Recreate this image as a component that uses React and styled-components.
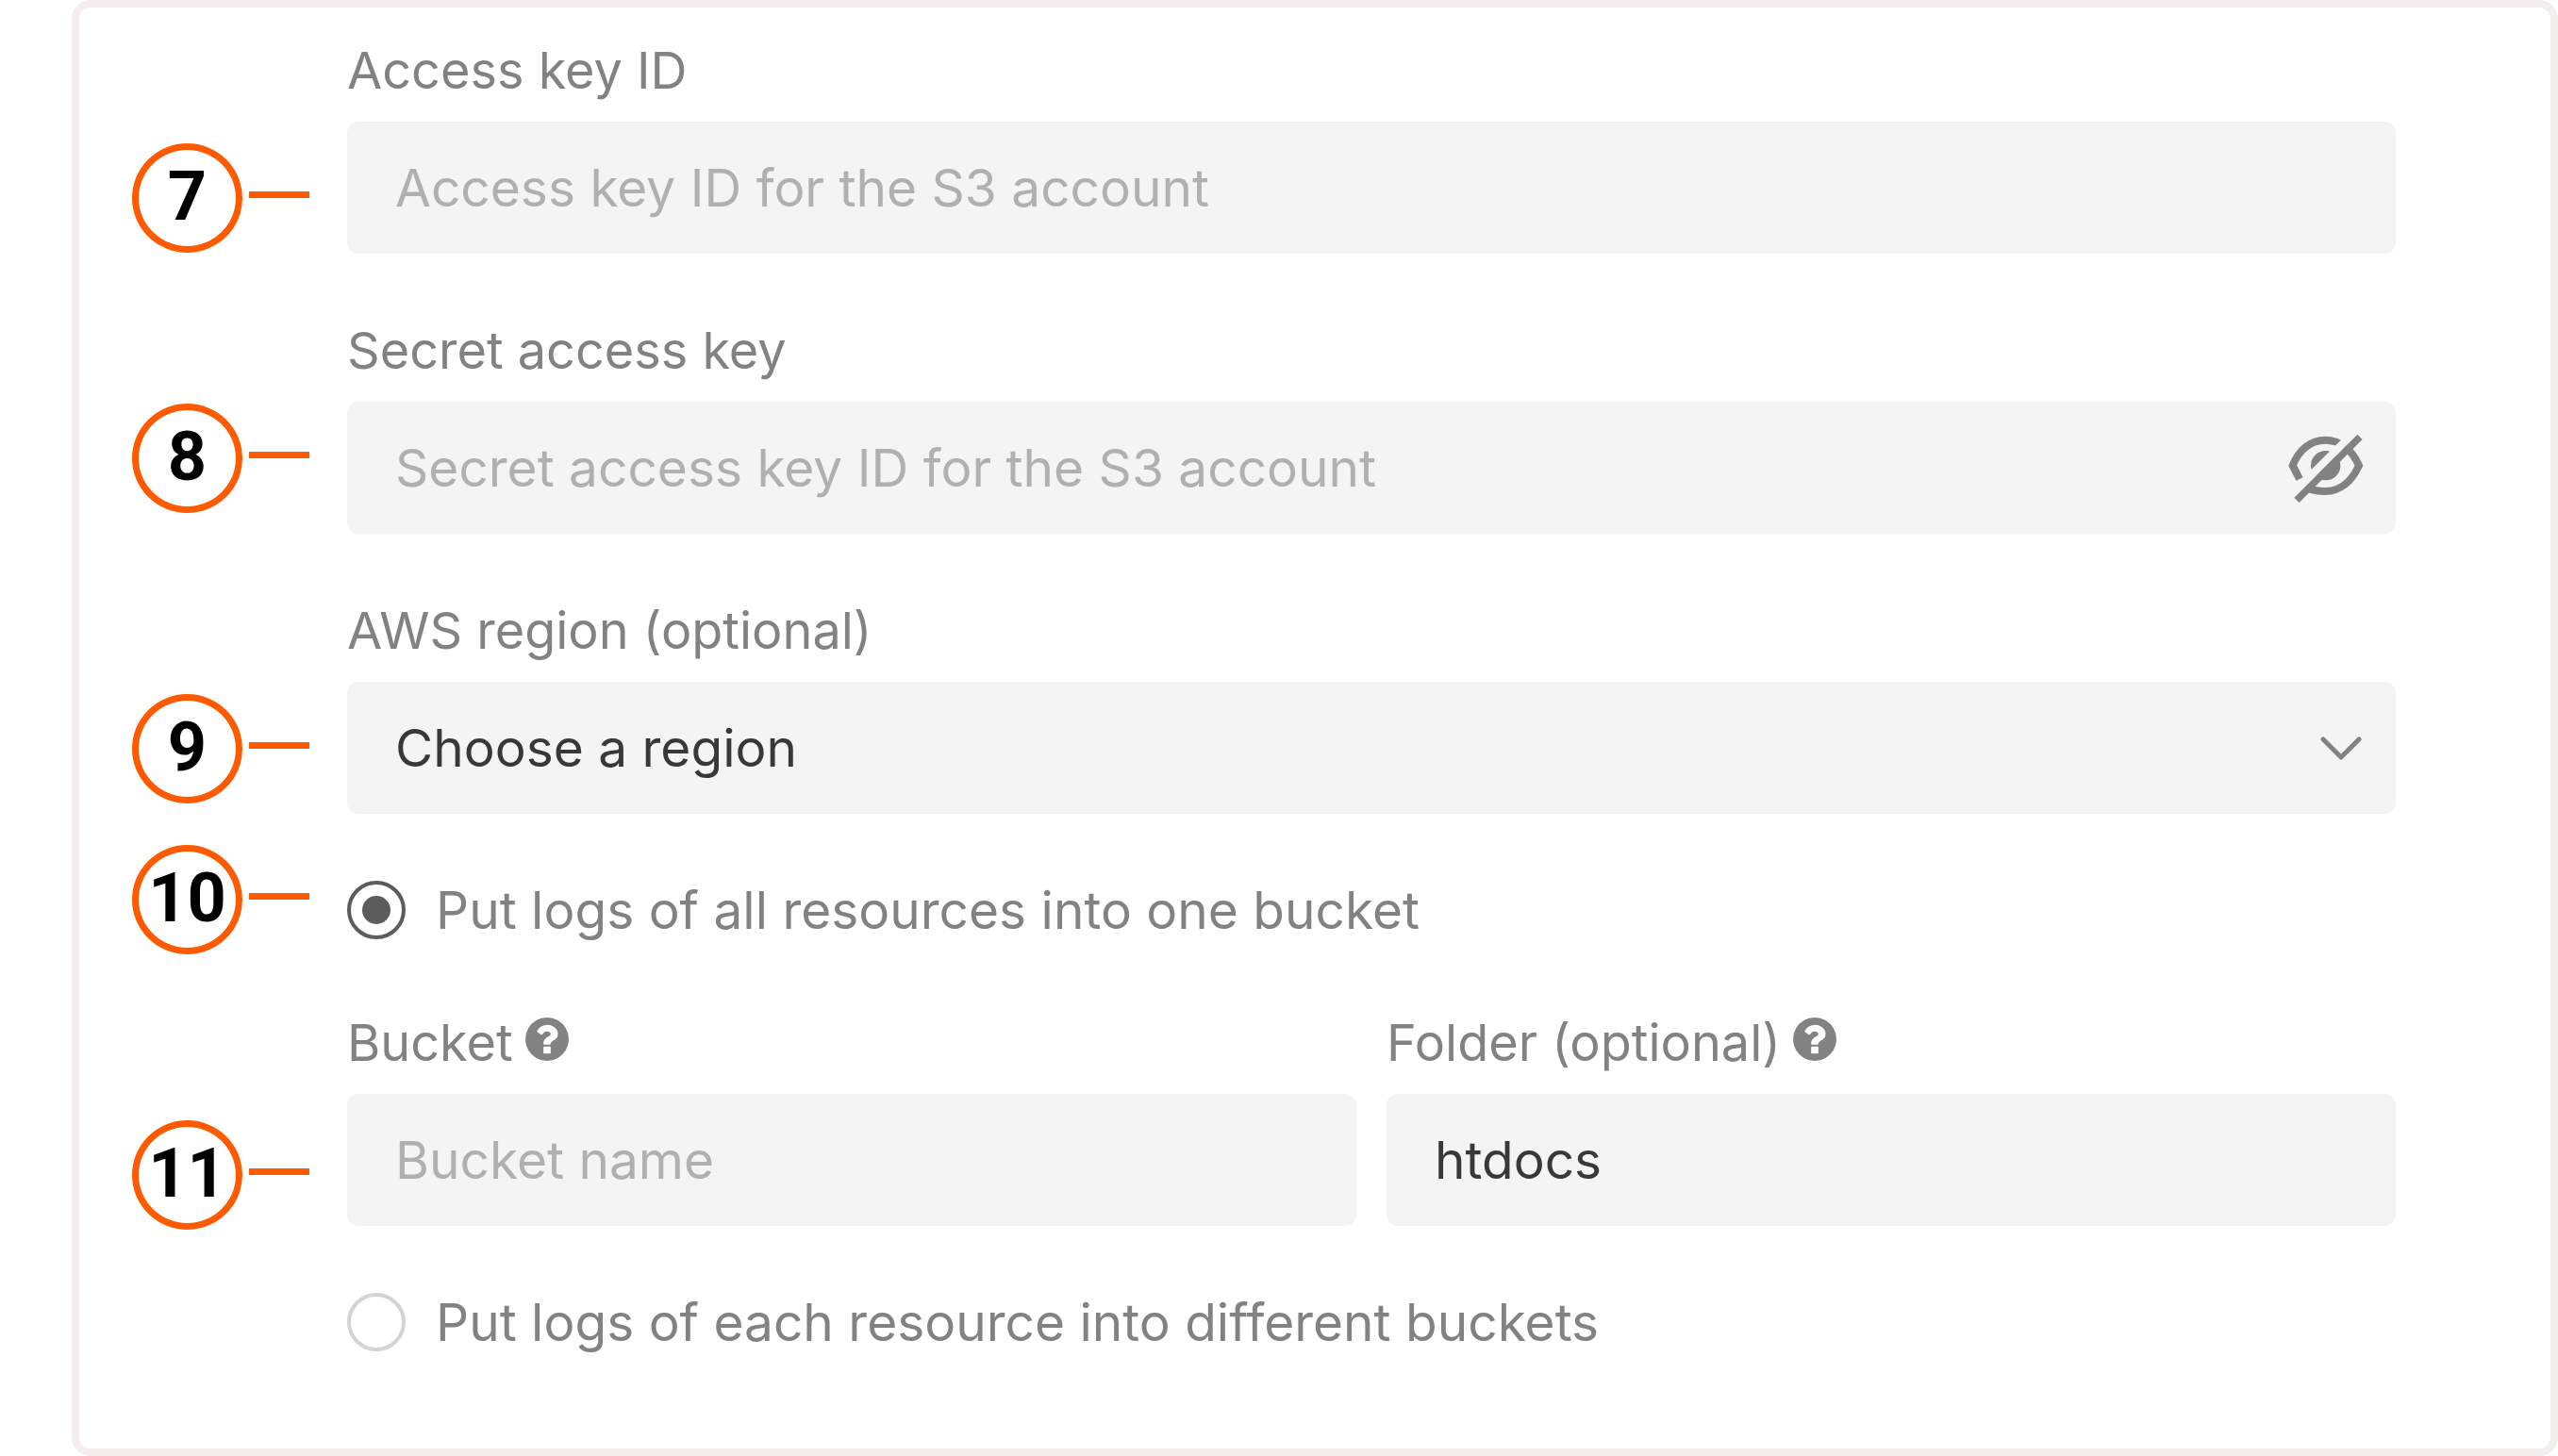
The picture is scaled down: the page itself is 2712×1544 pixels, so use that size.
import React, { useState } from "react";
import styled, { createGlobalStyle } from "styled-components";

const Global = createGlobalStyle`
  *, *::before, *::after { box-sizing: border-box; }
  body {
    margin: 0;
    background: #fff;
    font-family: Inter, "Liberation Sans", sans-serif;
  }
`;

const Panel = styled.main`
  display: grid;
  grid-template-columns: max-content minmax(0, 1fr);
  column-gap: 40px;
  margin-left: 76px;
  padding: 33px 164px 101px 56px;
  border: 8px solid #f4eeef;
  border-radius: 20px;
`;

const Steps = styled.ol`
  margin: 0;
  padding: 111px 0 0;
  list-style: none;
`;

const Step = styled.li`
  display: flex;
  align-items: center;
  gap: 7px;
  margin-bottom: ${(p) => p.$after}px;

  &::after {
    content: "";
    width: 64px;
    height: 7px;
    margin-bottom: 7px;
    background: #ff5a00;
  }
`;

const StepNumber = styled.span`
  display: flex;
  align-items: center;
  justify-content: center;
  width: 117px;
  height: 116px;
  padding-bottom: 2px;
  border: 7px solid #ff5a00;
  border-radius: 50%;
  color: #000;
  font: 700 72px/72px Roboto, "Liberation Sans", sans-serif;
`;

const Form = styled.form`
  display: flex;
  flex-direction: column;
  gap: 69px;
`;

const Field = styled.div`
  display: flex;
  flex-direction: column;
  gap: 20px;
`;

const FieldPair = styled.div`
  display: grid;
  grid-template-columns: 1fr 1fr;
  gap: 32px;
  padding-top: 5px;
`;

const LabelRow = styled.div`
  display: flex;
  align-items: center;
  gap: 13px;
`;

const Label = styled.label`
  color: #828282;
  font-size: 54px;
  line-height: 68px;
`;

const Control = styled.div`
  position: relative;
`;

const Input = styled.input`
  display: block;
  width: 100%;
  height: 140px;
  padding: 0 51px;
  border: 0;
  border-radius: 12px;
  background: #f4f4f4;
  color: #383838;
  font: 400 55px/68px Inter, "Liberation Sans", sans-serif;

  &::placeholder {
    color: #b0b0b0;
    opacity: 1;
  }
`;

const Select = styled(Input).attrs({ as: "select" })`
  appearance: none;
`;

const ChevronIcon = styled.svg`
  position: absolute;
  top: 56px;
  right: 36px;
  width: 44px;
  height: 28px;
  pointer-events: none;
`;

const IconButton = styled.button`
  display: block;
  padding: 0;
  border: 0;
  background: none;
  color: #828282;
  cursor: pointer;

  svg {
    display: block;
    width: 100%;
    height: 100%;
  }
`;

const RevealButton = styled(IconButton)`
  position: absolute;
  top: 34px;
  right: 34px;
  width: 80px;
  height: 74px;
`;

const HelpButton = styled(IconButton)`
  width: 46px;
  height: 46px;
  margin-bottom: 8px;
`;

const RadioRow = styled.label`
  display: flex;
  align-items: center;
  gap: 32px;
  color: #828282;
  font-size: 55px;
  line-height: 66px;
`;

const Radio = styled.input`
  appearance: none;
  display: grid;
  place-items: center;
  flex: none;
  width: 62px;
  height: 62px;
  margin: 0;
  border: 4px solid #d4d4d4;
  border-radius: 50%;

  &:checked {
    border-color: #5c5c5c;
  }

  &:checked::before {
    content: "";
    width: 30px;
    height: 30px;
    border-radius: 50%;
    background: #5c5c5c;
  }
`;

const steps = [
  { number: 7, after: 160 },
  { number: 8, after: 192 },
  { number: 9, after: 44 },
  { number: 10, after: 176 },
  { number: 11, after: 0 },
];

function Help({ label }) {
  return (
    <HelpButton type="button" aria-label={label}>
      <svg viewBox="128 128 1536 1536" fill="currentColor" aria-hidden="true">
        <path d="M1024 1376v-192q0-14-9-23t-23-9h-192q-14 0-23 9t-9 23v192q0 14 9 23t23 9h192q14 0 23-9t9-23zm256-672q0-88-55.5-163t-138.5-116-170-41q-243 0-371 213-15 24 8 42l132 100q7 6 19 6 16 0 25-12 53-68 86-92 34-24 86-24 48 0 85.5 26t37.5 59q0 38-20 61t-68 45q-63 28-115.5 86.5t-52.5 125.5v36q0 14 9 23t23 9h192q14 0 23-9t9-23q0-19 21.5-49.5t54.5-49.5q32-18 49-28.5t46-35 44.5-48 28-60.5 12.5-81zm384 192q0 209-103 385.5t-279.5 279.5-385.5 103-385.5-103-279.5-279.5-103-385.5 103-385.5 279.5-279.5 385.5-103 385.5 103 279.5 279.5 103 385.5z" />
      </svg>
    </HelpButton>
  );
}

function EyeOff() {
  return (
    <svg viewBox="0 0 240 222" fill="none" aria-hidden="true">
      <g stroke="currentColor" strokeWidth="24">
        <path d="M36 144 L14 101 C34 50 72 20 118 20 C164 20 202 50 225 101 C202 152 164 183 118 183 C98 183 82 181 66 175" />
      </g>
      <circle cx="119" cy="101" r="47" fill="currentColor" />
      <path d="M16 189 L189 16" stroke="#f4f4f4" strokeWidth="25" />
      <path d="M27 211 L228 10" stroke="currentColor" strokeWidth="22" />
    </svg>
  );
}

export default function App() {
  const [visible, setVisible] = useState(false);
  const [mode, setMode] = useState("one");

  return (
    <>
      <Global />
      <Panel>
        <Steps>
          {steps.map((step) => (
            <Step key={step.number} $after={step.after}>
              <StepNumber>{step.number}</StepNumber>
            </Step>
          ))}
        </Steps>

        <Form onSubmit={(e) => e.preventDefault()}>
          <Field>
            <Label htmlFor="access-key">Access key ID</Label>
            <Input id="access-key" type="text" placeholder="Access key ID for the S3 account" />
          </Field>

          <Field>
            <Label htmlFor="secret-key">Secret access key</Label>
            <Control>
              <Input
                id="secret-key"
                type={visible ? "text" : "password"}
                placeholder="Secret access key ID for the S3 account"
              />
              <RevealButton
                type="button"
                aria-label="Show secret access key"
                aria-pressed={visible}
                onClick={() => setVisible(!visible)}
              >
                <EyeOff />
              </RevealButton>
            </Control>
          </Field>

          <Field>
            <Label htmlFor="region">AWS region (optional)</Label>
            <Control>
              <Select id="region" defaultValue="">
                <option value="">Choose a region</option>
              </Select>
              <ChevronIcon viewBox="0 0 44 28" fill="none" aria-hidden="true">
                <path
                  d="M3 5 L22 24 L41 5"
                  stroke="#828282"
                  strokeWidth="5"
                  strokeLinecap="round"
                  strokeLinejoin="round"
                />
              </ChevronIcon>
            </Control>
          </Field>

          <RadioRow>
            <Radio
              type="radio"
              name="bucket-mode"
              checked={mode === "one"}
              onChange={() => setMode("one")}
            />
            Put logs of all resources into one bucket
          </RadioRow>

          <FieldPair>
            <Field>
              <LabelRow>
                <Label htmlFor="bucket">Bucket</Label>
                <Help label="About the bucket" />
              </LabelRow>
              <Input id="bucket" type="text" placeholder="Bucket name" />
            </Field>
            <Field>
              <LabelRow>
                <Label htmlFor="folder">Folder (optional)</Label>
                <Help label="About the folder" />
              </LabelRow>
              <Input id="folder" type="text" defaultValue="htdocs" />
            </Field>
          </FieldPair>

          <RadioRow>
            <Radio
              type="radio"
              name="bucket-mode"
              checked={mode === "each"}
              onChange={() => setMode("each")}
            />
            Put logs of each resource into different buckets
          </RadioRow>
        </Form>
      </Panel>
    </>
  );
}
